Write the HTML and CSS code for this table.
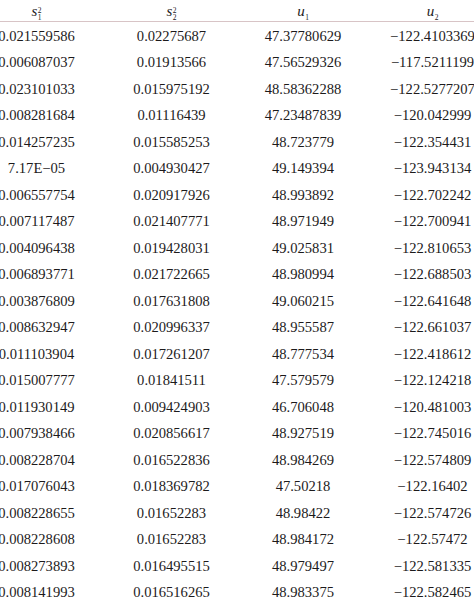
FILE: index.html
```html
<!DOCTYPE html>
<html>
<head>
<meta charset="utf-8">
<link rel="stylesheet" href="styles.css">
</head>
<body>
<div class="table">
  <div class="row head">
    <div class="cell"><span class="var">s</span><span class="idx"><span class="sup">2</span><span class="sub">1</span></span></div>
    <div class="cell"><span class="var">s</span><span class="idx"><span class="sup">2</span><span class="sub">2</span></span></div>
    <div class="cell"><span class="var">u</span><span class="idx"><span class="sup">&nbsp;</span><span class="sub">1</span></span></div>
    <div class="cell"><span class="var">u</span><span class="idx"><span class="sup">&nbsp;</span><span class="sub">2</span></span></div>
  </div>
  <div class="row"><div class="cell">0.021559586</div><div class="cell">0.02275687</div><div class="cell">47.37780629</div><div class="cell">−122.4103369</div></div>
  <div class="row"><div class="cell">0.006087037</div><div class="cell">0.01913566</div><div class="cell">47.56529326</div><div class="cell">−117.5211199</div></div>
  <div class="row"><div class="cell">0.023101033</div><div class="cell">0.015975192</div><div class="cell">48.58362288</div><div class="cell">−122.5277207</div></div>
  <div class="row"><div class="cell">0.008281684</div><div class="cell">0.01116439</div><div class="cell">47.23487839</div><div class="cell">−120.042999</div></div>
  <div class="row"><div class="cell">0.014257235</div><div class="cell">0.015585253</div><div class="cell">48.723779</div><div class="cell">−122.354431</div></div>
  <div class="row"><div class="cell">7.17E−05</div><div class="cell">0.004930427</div><div class="cell">49.149394</div><div class="cell">−123.943134</div></div>
  <div class="row"><div class="cell">0.006557754</div><div class="cell">0.020917926</div><div class="cell">48.993892</div><div class="cell">−122.702242</div></div>
  <div class="row"><div class="cell">0.007117487</div><div class="cell">0.021407771</div><div class="cell">48.971949</div><div class="cell">−122.700941</div></div>
  <div class="row"><div class="cell">0.004096438</div><div class="cell">0.019428031</div><div class="cell">49.025831</div><div class="cell">−122.810653</div></div>
  <div class="row"><div class="cell">0.006893771</div><div class="cell">0.021722665</div><div class="cell">48.980994</div><div class="cell">−122.688503</div></div>
  <div class="row"><div class="cell">0.003876809</div><div class="cell">0.017631808</div><div class="cell">49.060215</div><div class="cell">−122.641648</div></div>
  <div class="row"><div class="cell">0.008632947</div><div class="cell">0.020996337</div><div class="cell">48.955587</div><div class="cell">−122.661037</div></div>
  <div class="row"><div class="cell">0.011103904</div><div class="cell">0.017261207</div><div class="cell">48.777534</div><div class="cell">−122.418612</div></div>
  <div class="row"><div class="cell">0.015007777</div><div class="cell">0.01841511</div><div class="cell">47.579579</div><div class="cell">−122.124218</div></div>
  <div class="row"><div class="cell">0.011930149</div><div class="cell">0.009424903</div><div class="cell">46.706048</div><div class="cell">−120.481003</div></div>
  <div class="row"><div class="cell">0.007938466</div><div class="cell">0.020856617</div><div class="cell">48.927519</div><div class="cell">−122.745016</div></div>
  <div class="row"><div class="cell">0.008228704</div><div class="cell">0.016522836</div><div class="cell">48.984269</div><div class="cell">−122.574809</div></div>
  <div class="row"><div class="cell">0.017076043</div><div class="cell">0.018369782</div><div class="cell">47.50218</div><div class="cell">−122.16402</div></div>
  <div class="row"><div class="cell">0.008228655</div><div class="cell">0.01652283</div><div class="cell">48.98422</div><div class="cell">−122.574726</div></div>
  <div class="row"><div class="cell">0.008228608</div><div class="cell">0.01652283</div><div class="cell">48.984172</div><div class="cell">−122.57472</div></div>
  <div class="row"><div class="cell">0.008273893</div><div class="cell">0.016495515</div><div class="cell">48.979497</div><div class="cell">−122.581335</div></div>
  <div class="row"><div class="cell">0.008141993</div><div class="cell">0.016516265</div><div class="cell">48.983375</div><div class="cell">−122.582465</div></div>
</div>
</body>
</html>
```
FILE: styles.css
```css
html, body {
  margin: 0;
  padding: 0;
  background: #ffffff;
  overflow: hidden;
}
body {
  width: 474px;
  height: 604px;
  font-family: "Liberation Serif", "Times New Roman", serif;
  color: #1c1a1b;
}
.table {
  margin-left: -31px;
  width: 528px;
}
.row {
  display: grid;
  grid-template-columns: 135px 135px 128px 131px;
  height: 26.5px;
  align-items: center;
  font-size: 14.6px;
  line-height: 16px;
  padding-top: 1px;
  box-sizing: border-box;
}
.row.head {
  height: 22px;
  padding-top: 0;
  border-bottom: 1.5px solid #d8c4c6;
  align-items: end;
}
.cell {
  text-align: center;
  white-space: nowrap;
}
.head .cell {
  display: flex;
  justify-content: center;
  align-items: flex-end;
  padding-bottom: 4px;
}
.var {
  font-style: italic;
  font-size: 15px;
  line-height: 12px;
}
.idx {
  display: inline-flex;
  flex-direction: column;
  font-size: 7.5px;
  line-height: 7px;
  margin-left: 0.5px;
  margin-bottom: -4px;
}
.sup, .sub {
  display: block;
}
```
